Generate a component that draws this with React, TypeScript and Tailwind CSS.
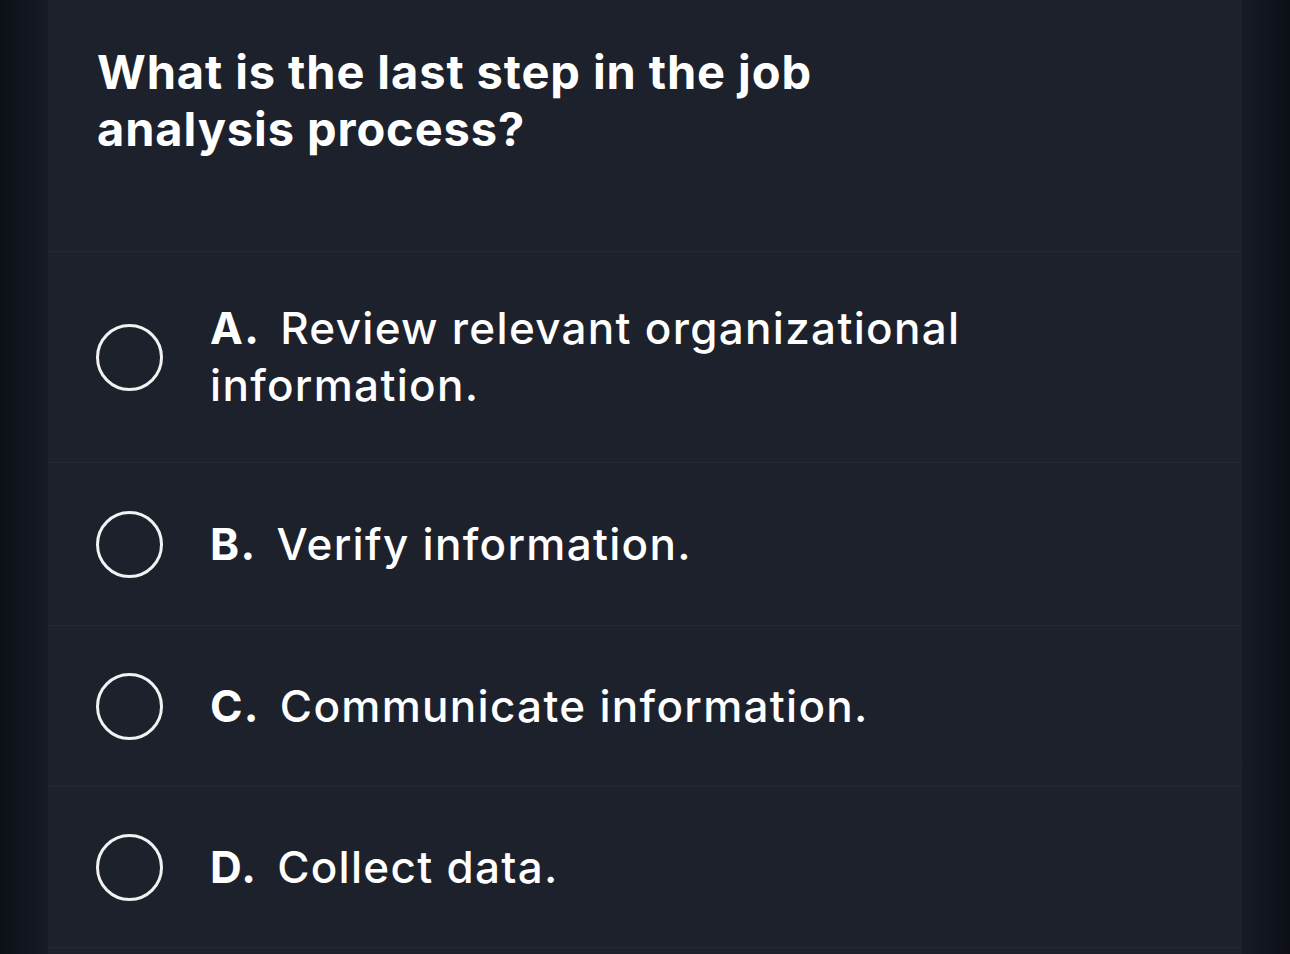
import React from 'react';

const options = [
  { letter: 'A.', text: 'Review relevant organizational information.', h: 'h-[211px]' },
  { letter: 'B.', text: 'Verify information.', h: 'h-[163px]' },
  { letter: 'C.', text: 'Communicate information.', h: 'h-[161px]' },
  { letter: 'D.', text: 'Collect data.', h: 'h-[161px]' },
];

export default function App() {
  return (
    <div
      className="flex min-h-screen w-full bg-[#12151d] text-white"
      style={{ fontFamily: 'Inter, "Noto Sans", "Liberation Sans", sans-serif' }}
    >
      {/* left shade */}
      <div className="w-[48px] shrink-0 bg-gradient-to-r from-[#0c0f16] to-[#171b24]" />

      {/* Question panel */}
      <main className="flex flex-1 flex-col bg-[#1d212c]">
        <section className="h-[252px] border-b border-[#232733] pl-[49px] pt-[43px]">
          <h1 className="max-w-[780px] text-[47px] font-bold leading-[57px] tracking-[0.9px]">
            What is the last step in the job analysis process?
          </h1>
        </section>

        {options.map((o) => (
          <div
            key={o.letter}
            className={`flex ${o.h} items-center border-b border-[#232733] pl-[48px]`}
          >
            <div className="h-[67px] w-[67px] shrink-0 rounded-full border-[3px] border-[#f2f2f2]" />
            <p className="ml-[47px] max-w-[800px] text-[44px] font-medium leading-[57px] tracking-[1.3px]">
              <span className="mr-[20px] font-bold">{o.letter}</span>
              {o.text}
            </p>
          </div>
        ))}

        <div className="flex-1" />
      </main>

      {/* right shade */}
      <div className="w-[48px] shrink-0 bg-gradient-to-l from-[#0c0f16] to-[#171b24]" />
    </div>
  );
}
